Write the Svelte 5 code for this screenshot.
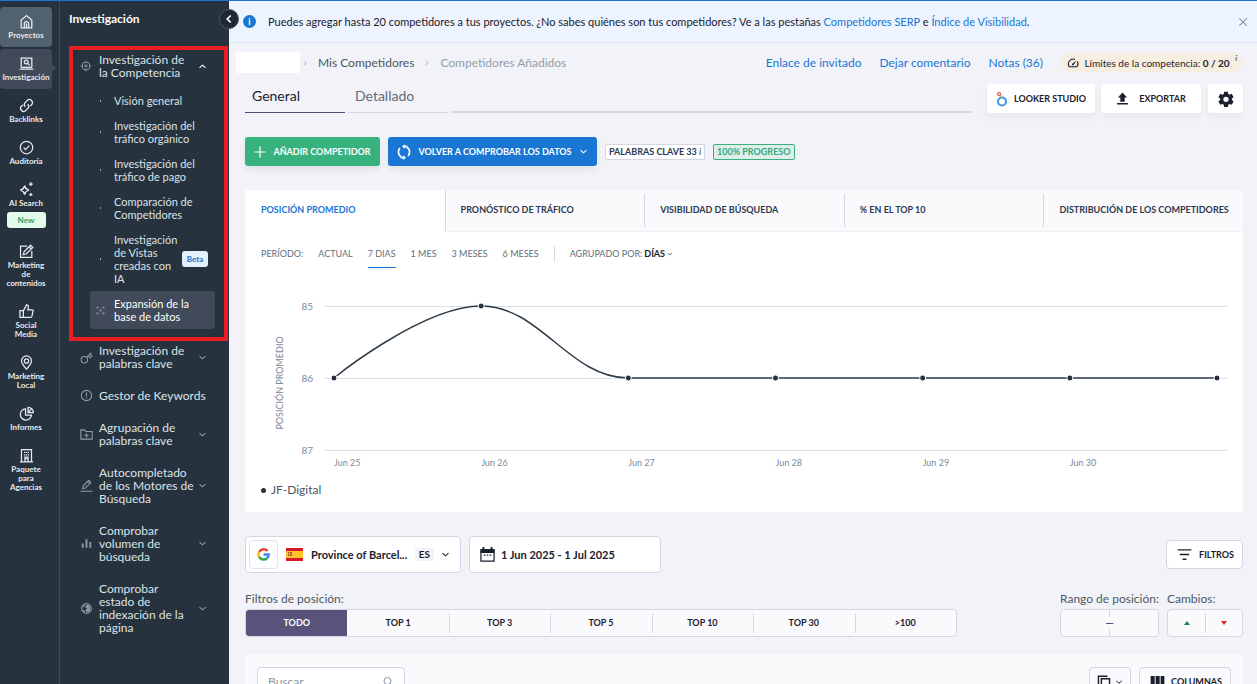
<script>
  const rail = [
    { icon: 'home', label: 'Proyectos', state: 'strong' },
    { icon: 'laptop', label: 'Investigación', state: 'current' },
    { icon: 'link', label: 'Backlinks' },
    { icon: 'check', label: 'Auditoría' },
    { icon: 'sparkle', label: 'AI\u00a0Search', badge: 'New' },
    { icon: 'edit', label: 'Marketing de contenidos' },
    { icon: 'thumb', label: 'Social Media' },
    { icon: 'pin', label: 'Marketing Local' },
    { icon: 'pie', label: 'Informes' },
    { icon: 'building', label: 'Paquete para Agencias' }
  ];

  const competition = [
    { label: 'Visión general' },
    { label: 'Investigación del tráfico orgánico' },
    { label: 'Investigación del tráfico de pago' },
    { label: 'Comparación de Competidores' },
    { label: 'Investigación de Vistas creadas con IA', badge: 'Beta' },
    { label: 'Expansión de la base de datos', active: true }
  ];

  const tools = [
    { icon: 'key', label: 'Investigación de palabras clave', more: true },
    { icon: 'alert', label: 'Gestor de Keywords' },
    { icon: 'folder', label: 'Agrupación de palabras clave', more: true },
    { icon: 'pencil', label: 'Autocompletado de los Motores de Búsqueda', more: true },
    { icon: 'bars', label: 'Comprobar volumen de búsqueda', more: true },
    { icon: 'globe', label: 'Comprobar estado de indexación de la página', more: true }
  ];

  const metrics = ['Posición promedio', 'Pronóstico de tráfico', 'Visibilidad de búsqueda', '% en el top 10', 'Distribución de los competidores'];
  const periods = ['Actual', '7 dias', '1 mes', '3 meses', '6 meses'];
  const tops = ['Todo', 'Top 1', 'Top 3', 'Top 5', 'Top 10', 'Top 30', '>100'];

  let metric = $state('Posición promedio');
  let period = $state('7 dias');
  let top = $state('Todo');
  let bannerOpen = $state(true);

  const series = [86, 85, 86, 86, 86, 86, 86];
  const days = ['Jun 25', 'Jun 26', 'Jun 27', 'Jun 28', 'Jun 29', 'Jun 30'];
  const ranks = [85, 86, 87];
  let chartWidth = $state(966);
  const left = 64;
  const yOf = (rank) => 30 + (rank - 85) * 72;
  let right = $derived(chartWidth);
  let step = $derived((right - left - 19) / (series.length - 1));
  let points = $derived(series.map((rank, i) => ({ x: left + 9 + i * step, y: yOf(rank) })));
  let curve = $derived(
    points
      .map((p, i) => {
        if (i === 0) return `M${p.x} ${p.y}`;
        const q = points[i - 1];
        const bend = step * 0.4;
        const startX = i === 1 ? q.x : q.x + bend;
        return `C${startX} ${q.y} ${p.x - bend} ${p.y} ${p.x} ${p.y}`;
      })
      .join('')
  );

  const icons = {
    home: '<path d="M3.5 22V9.5L12 2.5l8.500 7V22zM8.500 22v-6.500a3.500 3.500 0 0 1 7 0V22M12 15v7"/>',
    laptop: '<path d="M3.500 18V3.500h17V18M1 21h22M3.500 18h17"/><circle cx="11.500" cy="9.500" r="3"/><path d="M14 12l3 3"/>',
    link: '<path d="M10 14a5 5 0 0 1 0-7l3.500-3.500a5 5 0 0 1 7 7L18 13M14 10a5 5 0 0 1 0 7l-3.500 3.500a5 5 0 0 1-7-7L6 11"/>',
    check: '<circle cx="12" cy="12" r="10"/><path d="M7.500 12.500l3 3 6-6.500"/>',
    sparkle: '<path d="M9 6c1 4.500 2.500 6 7 7-4.500 1-6 2.500-7 7-1-4.500-2.500-6-7-7 4.500-1 6-2.500 7-7z"/><path d="M19 .5v6M16 3.500h6M19 17.500v5M16.500 20h5"/>',
    edit: '<path d="M13 3.500H2.500v18h18V11M7 17l1-4.500L18.500 2l3.500 3.500L11.500 16zM16 4.500L19.500 8"/>',
    thumb: '<path d="M1.500 10.500H7V21.500H1.500zM7 11l5-9.500c2.500 0 3.500 2 3 4L14 9.500h7.500c1 0 1.500 1 1 2L20.500 20c-.5 1-1 1.500-2 1.500H7"/>',
    pin: '<path d="M12 22.500c-5-5.500-8-9-8-13a8 8 0 0 1 16 0c0 4-3 7.500-8 13z"/><circle cx="12" cy="9.500" r="3.500"/>',
    pie: '<path d="M10.500 4.500a9 9 0 1 0 9.500 10h-9.500zM14.500 2v8.500H23A8.500 8.500 0 0 0 14.500 2zM15 10l5-5"/>',
    building: '<path d="M4 22V2.500h16V22M1.500 22h21M9.500 22v-5h5v5M8 7h2M14 7h2M8 11h2M14 11h2M11 7h2M11 11h2M8 14.500h8"/>',
    target: '<circle cx="12" cy="12" r="8"/><circle cx="12" cy="12" r="2.500"/><path d="M12 1v5M12 18v5M1 12h5M18 12h5"/>',
    key: '<circle cx="8" cy="16" r="6"/><path d="M12.500 11.500L21 3M15 9l3.500 3.500L22 9l-3.500-3.500"/>',
    alert: '<circle cx="12" cy="12" r="9.500"/><path d="M12 6.500V14M12 16v2"/>',
    folder: '<path d="M1.500 20.500v-17h7l2.500 3h11.500v14zM12 9.500v8M8 13.500h8"/>',
    pencil: '<path d="M1 22.500h22M5 17.500l1-5L16 2.500l4 4-10 10zM14 4.500l4 4"/>',
    bars: '<path d="M5 20v-8M12 20V4M19 20V9" stroke-width="3.500"/>',
    globe: '<circle cx="12" cy="12" r="9"/><path d="M12 5a7 7 0 0 1 0 14l-2-5 4-2-4-2z" fill="currentColor" stroke="none"/><path d="M9 6l-3 3M6 15l3 3"/>',
    frame: '<path d="M3 8V3h5M16 3h5v5M21 16v5h-5M8 21H3v-5M12 9v6M9 12h6"/>',
    up: '<path d="M4 15.500l8-7 8 7"/>',
    down: '<path d="M4 8.500l8 7 8-7"/>',
    back: '<path d="M15.500 5l-7 7 7 7"/>',
    next: '<path d="M8 5l8 7-8 7"/>',
    close: '<path d="M3 3l18 18M21 3L3 21"/>',
    plus: '<path d="M12 1v22M1 12h22"/>',
    sync: '<path d="M7.500 20.500A9.500 9.500 0 0 1 5 5.500M16.500 3.500A9.500 9.500 0 0 1 19 18.500"/><path d="M17.500 2.800a9.500 9.500 0 0 0-5-.3M6.500 21.200a9.500 9.500 0 0 0 5 .3"/><path d="M13.500-1.500v8L8.500 2.500zM10.500 25.500v-8l5 4z" fill="currentColor" stroke="none"/>',
    gauge: '<path d="M16 4.800A9.800 9.800 0 0 0 4.500 19.500h15A9.800 9.800 0 0 0 21 8.800"/><path d="M10.500 13.500L19.500 7l-6.500 9c-1 1-2.500.8-3-.2-.4-.8-.2-1.700.5-2.300z" fill="currentColor" stroke="none"/>',
    upload: '<path d="M12 1l8.500 9H16v8H8v-8H3.500zM2 20.500h20V23H2z" fill="currentColor" stroke="none"/>',
    gear: '<path fill="currentColor" stroke="none" fill-rule="evenodd" d="M9.200 1h5.600l.6 3.400 2 1.100 3.200-1.200 2.800 4.900-2.600 2.200v2.200l2.600 2.200-2.800 4.900-3.200-1.200-2 1.100-.6 3.400H9.200l-.6-3.400-2-1.100-3.200 1.200-2.800-4.900 2.600-2.200v-2.200L.6 9.200l2.800-4.900 3.200 1.200 2-1.100zM12 8.500a4 4 0 1 0 0 8 4 4 0 0 0 0-8z"/>',
    calendar: '<path d="M1.500 4.500h21v18h-21z"/><path d="M1 3h22v6.500H1zM4 0h3v4H4zM17 0h3v4h-3z" fill="currentColor" stroke="none"/><path d="M6 13h2.500M10.800 13h2.500M15.500 13H18"/>',
    filter: '<path d="M1 4.500h22M4.500 12h15M9 19.500h6"/>',
    search: '<circle cx="11" cy="10" r="7"/><path d="M16 15l4 5"/>',
    copy: '<path d="M7.500 6.500h14v17h-14z"/><path d="M2.500 20V2H18"/>',
    columns: '<path d="M1 3h6.500v19H1zM9 3h6.500v19H9zM17 3h6v19h-6z" fill="currentColor" stroke="none"/>'
  };
</script>

{#snippet icon(name, size, weight = 2)}
  <svg class="icon" viewBox="0 0 24 24" width={size} height={size} stroke-width={weight} aria-hidden="true">{@html icons[name]}</svg>
{/snippet}

<div class="app">
  <nav class="rail" aria-label="Secciones">
    {#each rail as item}
      <a href="#{item.icon}" class="rail-item {item.state ?? ''}">
        {@render icon(item.icon, 15)}
        <span>{item.label}</span>
        {#if item.badge}<b class="new">{item.badge}</b>{/if}
      </a>
    {/each}
  </nav>

  <aside class="side">
    <h2>Investigación</h2>
    <button class="collapse" aria-label="Contraer">{@render icon('back', 12, 3.5)}</button>
    <section class="group">
      <a href="#competencia" class="tool">
        <i>{@render icon('target', 12, 1.8)}</i>
        <span>Investigación de la Competencia</span>
        {@render icon('up', 9, 3)}
      </a>
      <ul>
        {#each competition as entry}
          <li>
            <a href="#{entry.label}" class="sub" class:active={entry.active} class:badged={entry.badge}>
              <i>
                {#if entry.active}{@render icon('frame', 9, 2.5)}{:else}<em></em>{/if}
              </i>
              <span>{entry.label}</span>
              {#if entry.badge}<b class="beta">{entry.badge}</b>{/if}
            </a>
          </li>
        {/each}
      </ul>
    </section>
    <div class="tools">
      {#each tools as tool}
        <a href="#{tool.icon}" class="tool" class:single={!tool.more}>
          <i>{@render icon(tool.icon, 13, 2)}</i>
          <span>{tool.label}</span>
          {#if tool.more}{@render icon('down', 9, 3)}{/if}
        </a>
      {/each}
    </div>
  </aside>

  <main>
    {#if bannerOpen}
      <div class="banner">
        <b class="info">i</b>
        <p>Puedes agregar hasta 20 competidores a tus proyectos. ¿No sabes quiénes son tus competidores? Ve a las pestañas <a href="#serp">Competidores SERP</a> e <a href="#visibilidad">Índice de Visibilidad</a>.</p>
        <button class="plain" aria-label="Cerrar" onclick={() => (bannerOpen = false)}>{@render icon('close', 10, 2.5)}</button>
      </div>
    {/if}

    <header class="crumbs">
      <nav aria-label="Ruta">
        <span class="project"></span>
        {@render icon('next', 8, 2.5)}
        <a href="#mis">Mis Competidores</a>
        {@render icon('next', 8, 2.5)}
        <span class="here">Competidores Añadidos</span>
      </nav>
      <div class="links">
        <a href="#invitado">Enlace de invitado</a>
        <a href="#comentario">Dejar comentario</a>
        <a href="#notas">Notas (36)</a>
        <span class="limits">{@render icon('gauge', 12, 2.2)}<span>Límites de la competencia: <b>0 / 20</b></span><i>i</i></span>
      </div>
    </header>

    <div class="views">
      <nav class="tabs" aria-label="Vista">
        <a href="#general" class="on">General</a>
        <a href="#detallado">Detallado</a>
        <span></span>
      </nav>
      <button class="card-btn looker">
        <svg viewBox="0 0 12 16" width="12" height="16" fill="none" aria-hidden="true">
          <circle cx="6" cy="10.500" r="4" stroke="#4394e8" stroke-width="2" />
          <path d="M4 4.500L6 6" stroke="#f3b927" stroke-width="2" />
          <circle cx="3" cy="3" r="1.500" stroke="#e2483d" stroke-width="1.200" />
        </svg>
        Looker Studio
      </button>
      <button class="card-btn export">{@render icon('upload', 13)}Exportar</button>
      <button class="card-btn gear" aria-label="Ajustes">{@render icon('gear', 16)}</button>
    </div>

    <div class="actions">
      <button class="solid green">{@render icon('plus', 12, 2.4)}Añadir competidor</button>
      <button class="solid blue">{@render icon('sync', 14, 3)}Volver a comprobar los datos{@render icon('down', 9, 3)}</button>
      <span class="tag">Palabras clave 33 <i>i</i></span>
      <span class="tag done">100% progreso</span>
    </div>

    <section class="card">
      <div class="metrics" role="tablist">
        {#each metrics as name}
          <button role="tab" aria-selected={metric === name} class:on={metric === name} onclick={() => (metric = name)}>{name}</button>
        {/each}
      </div>
      <div class="period">
        <span class="name">Período:</span>
        {#each periods as name}
          <button class:on={period === name} onclick={() => (period = name)}>{name}</button>
        {/each}
        <label><span>Agrupado por:</span>
          <select><option>DÍAS</option></select>
          {@render icon('down', 6, 3.5)}
        </label>
      </div>
      <div class="chart" bind:clientWidth={chartWidth}>
        <svg width={chartWidth} height="198" role="img" aria-label="Posición promedio">
          {#each ranks as rank}
            <line x1={left} x2={right} y1={yOf(rank) + 0.5} y2={yOf(rank) + 0.5} class="grid" />
            <text x="52" y={yOf(rank) + 4} class="rank">{rank}</text>
          {/each}
          {#each days as day, i}
            <text x={points[i].x} y="190" class="day">{day}</text>
          {/each}
          <text transform="translate(22 107) rotate(-90)" class="axis">POSICIÓN PROMEDIO</text>
          <path d={curve} class="curve" />
          {#each points as p}
            <circle cx={p.x} cy={p.y} r="3" class="dot" />
          {/each}
        </svg>
      </div>
      <p class="legend"><i></i>JF-Digital</p>
    </section>

    <div class="pickers">
      <button class="picker region">
        <span class="engine">
          <svg viewBox="0 0 24 24" width="13" height="13" fill="none" stroke-width="4.500" aria-hidden="true">
            <path d="M19.500 5.500A9.500 9.500 0 0 0 4 7.500" stroke="#ea4335" />
            <path d="M4 7A10 10 0 0 0 4 17" stroke="#fbbc05" />
            <path d="M4 16.500A9.500 9.500 0 0 0 18.500 19" stroke="#34a853" />
            <path d="M18.500 19A9 9 0 0 0 21.500 12H12" stroke="#4285f4" />
          </svg>
        </span>
        <svg viewBox="0 0 17 13" width="17" height="13" aria-hidden="true">
          <rect width="17" height="13" fill="#d8172b" /><rect y="3" width="17" height="7" fill="#fcc42c" />
          <rect x="2" y="4" width="4" height="4" fill="#b5622c" /><rect x="3" y="5" width="1" height="2" fill="#f1dfb0" />
        </svg>
        <span class="place">Province of Barcel...</span>
        <span class="lang">ES</span>
        {@render icon('down', 9, 3)}
      </button>
      <button class="picker date">{@render icon('calendar', 15)}1 Jun 2025 - 1 Jul 2025</button>
      <button class="picker filters">{@render icon('filter', 15, 2.2)}Filtros</button>
    </div>

    <div class="positions">
      <div class="field tops">
        <span>Filtros de posición:</span>
        <div class="segments">
          {#each tops as name}
            <button class:on={top === name} onclick={() => (top = name)}>{name}</button>
          {/each}
        </div>
      </div>
      <div class="field range">
        <label for="from">Rango de posición:</label>
        <div class="segments">
          <input id="from" type="text" aria-label="Rango de posición, desde" />
          <span>—</span>
          <input type="text" aria-label="Rango de posición, hasta" />
        </div>
      </div>
      <div class="field changes">
        <span>Cambios:</span>
        <div class="segments">
          <button aria-label="Subidas"><i class="rise"></i></button>
          <button aria-label="Bajadas"><i class="fall"></i></button>
        </div>
      </div>
    </div>

    <section class="table-bar">
      <label class="search"><input type="search" placeholder="Buscar" aria-label="Buscar" />{@render icon('search', 12)}</label>
      <button class="picker copy" aria-label="Copiar">{@render icon('copy', 14, 2.5)}{@render icon('down', 8, 3)}</button>
      <button class="picker columns">{@render icon('columns', 15)}Columnas</button>
    </section>
  </main>
</div>

<style>
  :global(body) { margin: 0; }
  .app, .app * { box-sizing: border-box; }
  .app {
    display: flex;
    height: 100vh;
    overflow: hidden;
    border-top: 1px solid #1976d2;
    background: #f2f3f8;
    color: #1b212c;
    font-family: Lato, "Noto Sans", sans-serif;
    font-size: 12px;
    line-height: 16px;
  }
  a { color: inherit; text-decoration: none; }
  p, h2, ul { margin: 0; padding: 0; }
  ul { list-style: none; }
  button, input, select { font: inherit; color: inherit; }
  button { padding: 0; border: 0; background: none; white-space: nowrap; }
  .icon { flex: none; display: block; overflow: visible; fill: none; stroke: currentColor; }

  .rail {
    flex: none;
    display: flex;
    flex-direction: column;
    gap: 2px;
    width: 60px;
    padding-top: 6px;
    border-right: 1px solid #414c5a;
    background: #26323e;
    color: #e6ebf0;
  }
  .rail-item {
    display: flex;
    flex-direction: column;
    align-items: center;
    width: 52px;
    padding: 7px 0;
    border-radius: 4px;
    font-size: 8px;
    font-weight: 700;
    line-height: 9px;
    text-align: center;
  }
  .rail-item span { width: min-content; margin-top: 2px; }
  .rail-item.strong { background: #52616e; }
  .rail-item.current { position: relative; background: #404a58; }
  .rail-item.current::after {
    content: "";
    position: absolute;
    left: 100%;
    top: 15px;
    border: 4px solid transparent;
    border-left-color: #404a58;
    border-right: 0;
  }
  .new {
    width: 39px;
    margin-top: 4px;
    border-radius: 3px;
    background: #e2fbea;
    color: #38a377;
    line-height: 16px;
  }

  .side { position: relative; z-index: 1; flex: none; width: 169px; background: #26323e; color: #dce2e9; }
  .side h2 { padding: 10px 9px; color: #fff; font-size: 12px; line-height: 16px; }
  .collapse {
    position: absolute;
    top: 8px;
    right: -10px;
    display: grid;
    place-items: center;
    width: 20px;
    height: 20px;
    border: 1px solid #4a5563;
    border-radius: 50%;
    background: #1d2833;
    color: #fff;
  }
  .group { margin: 9px 1px 0 9px; padding: 3px 9px 8px 7px; border: 4px solid #ec1c24; }
  .tool { display: flex; align-items: center; line-height: 13px; }
  .tool i { display: flex; width: 19px; color: #8f9aa6; }
  .tool span { flex: 1; padding-right: 4px; }
  .tool.single span { padding-right: 0; }
  .tool > :global(.icon) { color: #8f9aa6; }
  .group .tool > :global(.icon) { margin-right: 8px; color: #fff; }
  .group ul { padding: 9px 0 0 10px; }
  .sub { display: flex; align-items: center; padding: 6px 0; border-radius: 3px; font-size: 11px; line-height: 13px; }
  .sub i { display: grid; place-items: center; flex: none; width: 20px; margin-right: 4px; color: #8f9aa6; }
  .sub em { width: 1px; height: 2px; background: #98a2ae; }
  .sub span { flex: 1; padding-right: 12px; }
  .sub.badged span { padding-right: 1px; }
  .sub.active { background: #404a58; color: #fff; }
  .beta { flex: none; width: 26px; margin-right: 7px; border-radius: 3px; background: #e3f1fd; color: #1e6db8; font-size: 8px; line-height: 16px; text-align: center; }
  .tools { display: flex; flex-direction: column; gap: 19px; padding: 3px 22px 0 20px; }

  main { flex: 1; min-width: 0; overflow-y: auto; scrollbar-width: none; }
  .banner {
    display: flex;
    align-items: center;
    gap: 12px;
    min-height: 42px;
    padding: 0 9px 0 14px;
    border-bottom: 1px solid #dfe0ea;
    background: #edf3ff;
  }
  .banner p { flex: 1; font-size: 11px; }
  .banner a, .links a { color: #1976d2; }
  .info { width: 13px; height: 13px; border-radius: 50%; background: #1976d2; color: #fff; font-size: 9px; line-height: 13px; text-align: center; }
  .plain { color: #75808c; }

  .crumbs { display: flex; justify-content: space-between; align-items: center; padding: 9px 14px 0 7px; }
  .crumbs nav { display: flex; align-items: center; gap: 9px; color: #4c5864; }
  .crumbs nav :global(.icon) { color: #a9b0ba; }
  .project { width: 64px; height: 21px; margin-right: -8px; background: #fff; }
  .here { color: #949ea8; }
  .links { display: flex; align-items: center; gap: 18px; }
  .limits { display: flex; align-items: center; width: 182px; height: 19px; padding: 0 6px; border-radius: 10px; background: #f6eee0; font-size: 10px; }
  .limits > span { flex: 1; text-align: center; }
  .limits i { align-self: flex-start; font-size: 8px; line-height: 11px; }

  .views { display: flex; align-items: flex-start; padding: 11px 14px 0 16px; }
  .tabs { flex: 1; display: flex; align-items: flex-end; margin-right: 16px; font-size: 14px; color: #5d6b78; }
  .tabs a { width: 100px; height: 29px; margin-right: 3px; padding: 4px 7px; border-bottom: 1px solid #d5d6e3; }
  .tabs a.on { border-color: #4f4a7a; color: #1b212c; }
  .tabs span { flex: 1; border-bottom: 2px solid #d5d6e3; }
  .card-btn {
    display: flex;
    align-items: center;
    justify-content: center;
    height: 29px;
    border-radius: 3px;
    background: #fff;
    box-shadow: 0 4px 6px #1b212c0d;
    font-size: 9px;
    font-weight: 700;
    text-transform: uppercase;
  }
  .looker { gap: 6px; width: 108px; }
  .export { gap: 10px; width: 100px; margin-left: 6px; }
  .gear { width: 35px; margin-left: 7px; }

  .actions { display: flex; align-items: center; padding: 24px 14px 24px 16px; }
  .solid {
    display: flex;
    align-items: center;
    justify-content: center;
    gap: 7px;
    height: 29px;
    margin-right: 8px;
    border-radius: 3px;
    box-shadow: 0 4px 6px #1b212c12;
    color: #fff;
    font-size: 9px;
    font-weight: 700;
    text-transform: uppercase;
  }
  .green { width: 135px; background: #37b27e; }
  .blue { width: 209px; background: #1976d2; }
  .tag { margin-right: 8px; padding: 0 3px; border: 1px solid #d5d6e3; border-radius: 2px; background: #fff; color: #2c3950; font-size: 9px; font-weight: 700; line-height: 14px; text-transform: uppercase; }
  .tag i { font-weight: 400; text-transform: none; }
  .tag.done { border-color: #37b27e; background: #dfeeeb; color: #37a87a; }

  .card { margin: 0 14px 24px 16px; padding-bottom: 14px; border-radius: 4px; background: #fff; overflow: hidden; }
  .metrics { display: grid; grid-template-columns: repeat(5, 1fr); height: 42px; }
  .metrics button {
    position: relative;
    padding: 0 0 2px 16px;
    border-bottom: 1px solid #f0f0f5;
    background: #fafafc;
    color: #2c3950;
    font-size: 9px;
    font-weight: 700;
    text-align: left;
    text-transform: uppercase;
  }
  .metrics button + button::before { content: ""; position: absolute; left: 0; top: 4px; bottom: 4px; border-left: 1px solid #d5d6e3; }
  .metrics .on { border-color: #fff; background: #fff; color: #1976d2; }
  .metrics .on + button::before { top: 0; bottom: 0; }
  .period { display: flex; align-items: center; gap: 15px; padding: 8px 16px 0; color: #5f6e7b; font-size: 9px; text-transform: uppercase; }
  .period button { height: 28px; border-bottom: 1px solid transparent; text-transform: uppercase; }
  .period button.on { border-color: #1976d2; }
  .period label { display: flex; align-items: center; gap: 2px; padding-left: 15px; border-left: 1px solid #d5d6e3; color: #5f6e7b; }
  .period select { padding: 0; border: 0; appearance: none; background: none; color: #1b212c; font-weight: 700; }
  .chart { margin: 8px 16px 0; overflow: hidden; }
  .chart svg { display: block; }
  .grid { stroke: #d9e0e8; }
  .chart text { fill: #7b8a98; font-size: 9px; }
  .chart .rank { font-size: 10px; text-anchor: end; }
  .axis { text-anchor: middle; }
  .curve { fill: none; stroke: #303d49; stroke-width: 1.5; }
  .dot { fill: #25323e; stroke: #fff; }
  .legend { display: flex; align-items: center; gap: 5px; margin-top: 8px; padding: 0 16px; color: #4c5864; }
  .legend i { width: 5px; height: 5px; border-radius: 50%; background: #25323e; }

  .pickers { display: flex; align-items: center; gap: 8px; padding: 0 14px 0 16px; }
  .picker { display: flex; align-items: center; height: 37px; border: 1px solid #d5d6e3; border-radius: 4px; background: #fff; font-size: 11px; font-weight: 700; }
  .region { width: 216px; padding: 0 10px 0 3px; }
  .engine { display: grid; place-items: center; width: 29px; height: 29px; margin-right: 8px; border: 1px solid #dfe1ec; border-radius: 4px; }
  .place { flex: 1; margin-left: 8px; text-align: left; }
  .lang { margin-right: 7px; padding: 0 4px; border-radius: 2px; background: #f2f3f8; font-size: 10px; line-height: 13px; }
  .date { gap: 6px; width: 192px; padding-left: 10px; }
  .filters { gap: 7px; height: 29px; margin-left: auto; padding: 0 8px 0 10px; font-size: 9px; text-transform: uppercase; }

  .positions { display: flex; align-items: flex-start; padding: 18px 14px 0 16px; color: #4c5864; }
  .field { display: flex; flex-direction: column; gap: 2px; white-space: nowrap; }
  .tops { flex: 1; max-width: 712px; }
  .range { width: 99px; margin-left: auto; }
  .changes { width: 76px; margin-left: 8px; }
  .segments { display: flex; height: 28px; border: 1px solid #d5d6e3; border-radius: 4px; background: #fafafc; color: #1b212c; overflow: hidden; }
  .segments button { position: relative; flex: 1; display: grid; place-items: center; font-size: 9px; font-weight: 700; text-transform: uppercase; }
  .segments button + button::before { content: ""; position: absolute; left: 0; top: 3px; bottom: 3px; border-left: 1px solid #d5d6e3; }
  .segments .on { background: #59527a; color: #fff; }
  .segments .on + button::before { display: none; }
  .range .segments { position: relative; }
  .range .segments span { position: absolute; left: 50%; top: 7px; width: 10px; margin-left: -5px; background: #fafafc; color: #27276b; font-size: 11px; line-height: 12px; text-align: center; }
  .segments input { flex: 1; min-width: 0; padding: 0 6px; border: 0; background: none; outline: 0; }
  .segments input:last-child { border-left: 1px solid #d5d6e3; }
  .rise, .fall { border: 3px solid transparent; }
  .rise { border-top: 0; border-bottom: 4px solid #1e8060; }
  .fall { border-bottom: 0; border-top: 4px solid #e8202a; }

  .table-bar { display: flex; gap: 8px; min-height: 60px; margin: 18px 14px 0 16px; padding: 12px; border-radius: 4px; background: #fafafc; }
  .search { display: flex; align-items: center; width: 148px; height: 29px; margin-right: auto; padding: 0 10px; border: 1px solid #d5d6e3; border-radius: 4px; background: #fff; color: #8d97a1; }
  .search input { flex: 1; min-width: 0; padding: 0; border: 0; background: none; outline: 0; }
  .search input::placeholder { color: #8d97a1; opacity: 1; }
  .copy { gap: 4px; height: 29px; padding: 0 7px; background: #fafafc; }
  .columns { gap: 6px; height: 29px; padding: 0 8px 0 10px; background: #fafafc; font-size: 9px; text-transform: uppercase; }
</style>
